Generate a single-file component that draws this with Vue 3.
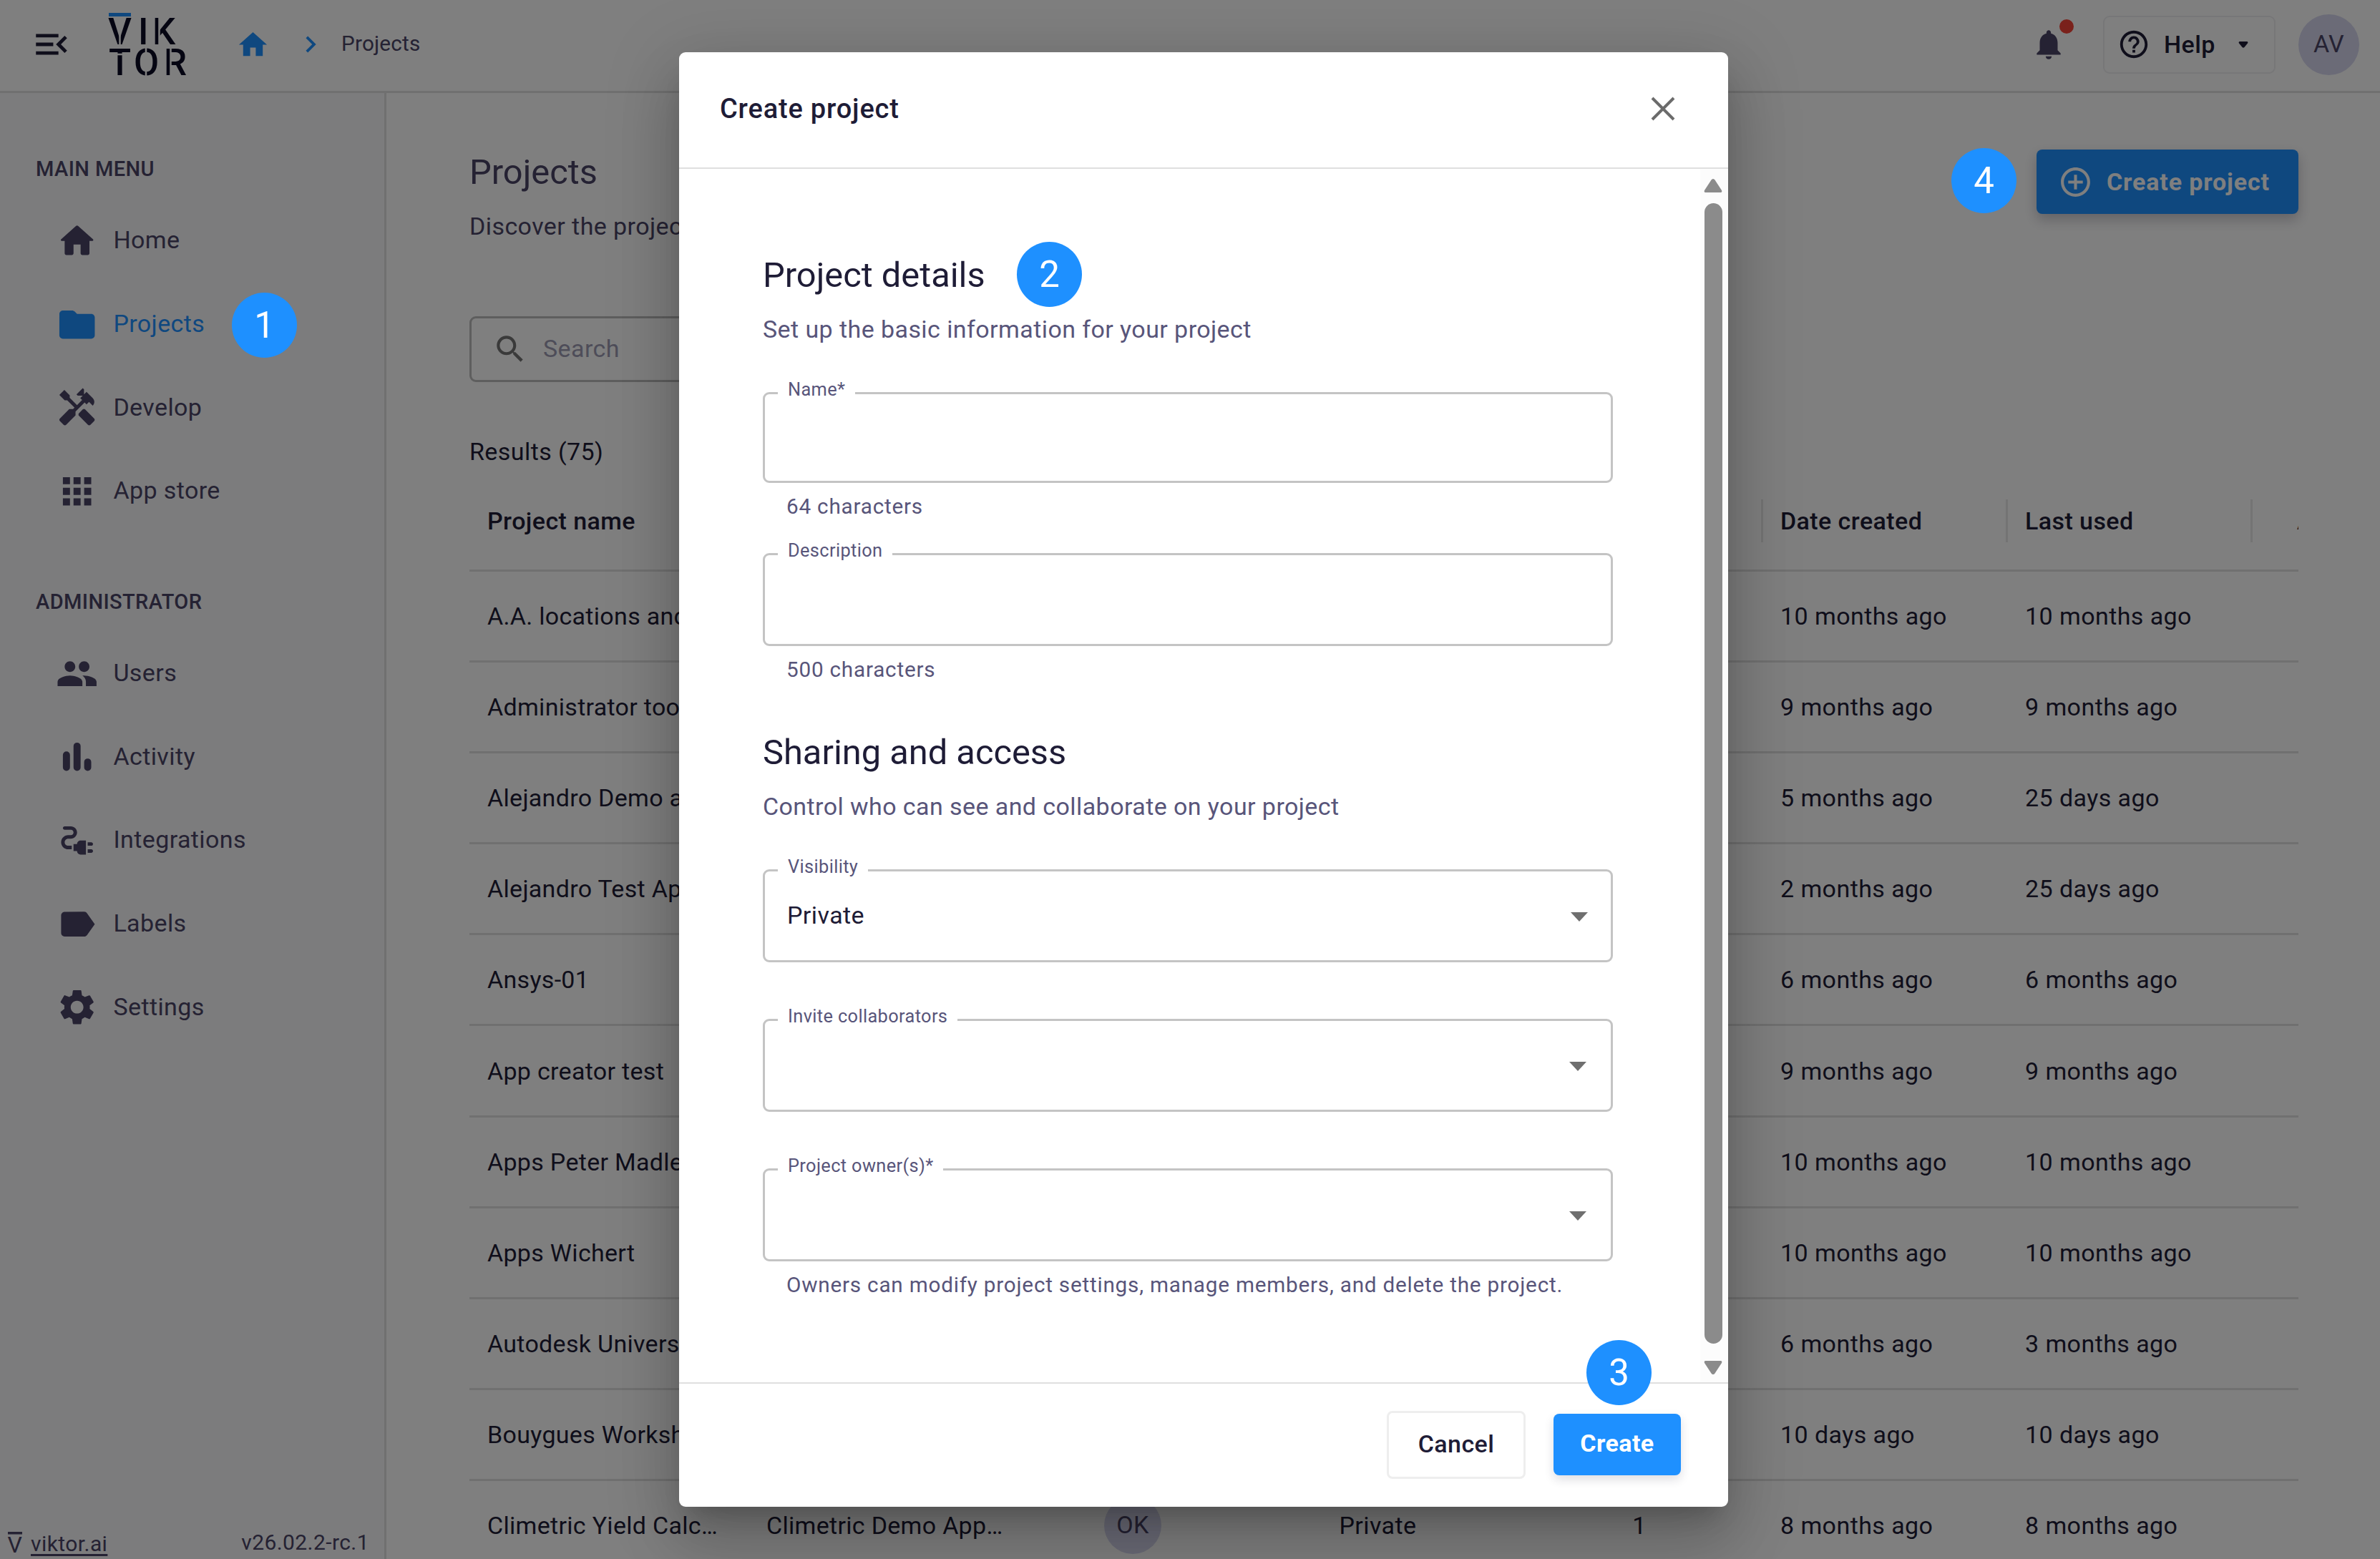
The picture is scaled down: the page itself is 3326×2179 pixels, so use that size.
<template>
  <div class="page">
    <header class="topbar">
      <svg class="menu-icon" viewBox="0 0 24 24"><path :d="icons.menuOpen" /></svg>
      <svg class="logo" viewBox="0 0 110 90">
        <rect class="logo-bar" x="2" y="1" width="31" height="5" />
        <text x="1 43 63" y="44.5">VIK</text>
        <text x="2 37 79" y="87.5">TOR</text>
        <path class="logo-cut" d="M0 59H34M17.500 30V46M54 48V56M54 82V90M72.500 6V46M88.500 50V90" />
      </svg>
      <svg class="home-icon" viewBox="0 0 24 24"><path :d="icons.homeSharp" /></svg>
      <svg class="crumb-arrow" viewBox="0 0 24 24"><path :d="icons.chevron" /></svg>
      <span class="crumb">Projects</span>
      <div class="bell">
        <svg viewBox="0 0 24 24"><path :d="icons.bell" /></svg>
        <i class="dot"></i>
      </div>
      <button class="help-btn">
        <svg class="help-icon" viewBox="0 0 24 24"><path :d="icons.help" /></svg>
        <span>Help</span>
        <svg class="help-caret" viewBox="0 0 14 9"><path d="M1.500 0H12.500Q14 1 13 2.500L8.500 8Q7 9.500 5.500 8L1 2.500Q0 1 1.500 0Z" /></svg>
      </button>
      <div class="avatar">AV</div>
    </header>

    <div class="body">
      <aside class="sidebar">
        <nav v-for="group in menu" :key="group.title" class="group">
          <h4>{{ group.title }}</h4>
          <a v-for="item in group.items" :key="item.label" class="nav-item" :class="{ active: item.active }">
            <svg viewBox="0 0 24 24"><path :d="icons[item.icon]" /></svg>
            <span>{{ item.label }}</span>
          </a>
        </nav>
        <div class="sidebar-footer">
          <svg class="mini-logo" viewBox="0 0 20 30">
            <rect x="0" y="0" width="20" height="3.500" />
            <text x="-0.500" y="29">V</text>
          </svg>
          <a class="site">viktor.ai</a>
          <span class="version">v26.02.2-rc.1</span>
        </div>
      </aside>

      <main class="content">
        <div class="content-head">
          <div>
            <h1>Projects</h1>
            <p class="lead">Discover the projects you have access to</p>
          </div>
          <button class="create-btn">
            <svg viewBox="0 0 24 24"><path :d="icons.addCircle" /></svg>
            <span>Create project</span>
          </button>
        </div>
        <div class="search">
          <svg viewBox="0 0 24 24"><path :d="icons.search" /></svg>
          <span>Search</span>
        </div>
        <div class="results">Results (75)</div>
        <div class="table">
          <div class="row head">
            <div class="cell">Project name</div>
            <div class="cell">Apps</div>
            <div class="cell center">Owner</div>
            <div class="cell center">Visibility</div>
            <div class="cell center">Members</div>
            <div class="cell split">Date created</div>
            <div class="cell split">Last used</div>
            <div class="cell split actions">Actions</div>
          </div>
          <div v-for="p in projects" :key="p.name" class="row">
            <div class="cell name">{{ p.name }}</div>
            <div class="cell name">{{ p.app }}</div>
            <div class="cell center"><span v-if="p.owner" class="owner">{{ p.owner }}</span></div>
            <div class="cell center">{{ p.visibility }}</div>
            <div class="cell center">{{ p.members }}</div>
            <div class="cell">{{ p.created }}</div>
            <div class="cell">{{ p.used }}</div>
            <div class="cell"></div>
          </div>
        </div>
      </main>
    </div>

    <div class="backdrop">
      <section class="dialog">
        <div class="dialog-head">
          <h2>Create project</h2>
          <svg class="close" viewBox="0 0 34 34"><path d="M2 2L32 32M32 2L2 32" /></svg>
        </div>
        <div class="dialog-body">
          <form class="form">
            <h3>Project details</h3>
            <p class="sub">Set up the basic information for your project</p>
            <fieldset class="field name-field"><legend>Name*</legend></fieldset>
            <p class="hint">64 characters</p>
            <fieldset class="field"><legend>Description</legend></fieldset>
            <p class="hint">500 characters</p>

            <h3 class="second">Sharing and access</h3>
            <p class="sub">Control who can see and collaborate on your project</p>
            <fieldset class="field select visibility">
              <legend>Visibility</legend>
              <span>Private</span>
              <i class="caret"></i>
            </fieldset>
            <fieldset class="field select">
              <legend>Invite collaborators</legend>
              <i class="caret"></i>
            </fieldset>
            <fieldset class="field select">
              <legend>Project owner(s)*</legend>
              <i class="caret"></i>
            </fieldset>
            <p class="hint">Owners can modify project settings, manage members, and delete the project.</p>
          </form>
          <div class="scrollbar">
            <svg viewBox="0 0 26 20"><path d="M13 1Q14.500 1 15.500 2.500L25 17Q26 20 23.500 20H2.500Q0 20 1 17L10.500 2.500Q11.500 1 13 1Z" /></svg>
            <div class="thumb"></div>
            <svg class="down" viewBox="0 0 26 20"><path d="M13 1Q14.500 1 15.500 2.500L25 17Q26 20 23.500 20H2.500Q0 20 1 17L10.500 2.500Q11.500 1 13 1Z" /></svg>
          </div>
        </div>
        <div class="dialog-foot">
          <button class="btn cancel">Cancel</button>
          <button class="btn primary">Create</button>
        </div>
      </section>
    </div>

    <span v-for="n in 4" :key="n" class="step" :class="'step-' + n">{{ n }}</span>
  </div>
</template>

<script setup>
import { ref } from 'vue'

const icons = {
  menuOpen: 'M3 18h13v-2H3v2zM3 13h10v-2H3v2zM3 6v2h13V6H3zM21 15.590L17.420 12 21 8.410 19.590 7l-5 5 5 5L21 15.590z',
  homeSharp: 'M10 20v-6h4v6h5v-8h3L12 3 2 12h3v8z',
  chevron: 'M10 6L8.590 7.410 13.170 12l-4.580 4.590L10 18l6-6z',
  bell: 'M12 22c1.100 0 2-.9 2-2h-4c0 1.100.89 2 2 2zm6-6v-5c0-3.070-1.640-5.640-4.500-6.320V4c0-.83-.67-1.500-1.500-1.500s-1.500.67-1.500 1.500v.68C7.630 5.360 6 7.920 6 11v5l-2 2v1h16v-1l-2-2z',
  help: 'M11 18h2v-2h-2v2zm1-16C6.480 2 2 6.480 2 12s4.480 10 10 10 10-4.480 10-10S17.520 2 12 2zm0 18c-4.410 0-8-3.590-8-8s3.590-8 8-8 8 3.590 8 8-3.590 8-8 8zm0-14c-2.210 0-4 1.790-4 4h2c0-1.100.9-2 2-2s2 .9 2 2c0 2-3 1.750-3 5h2c0-2.250 3-2.500 3-5 0-2.210-1.790-4-4-4z',
  addCircle: 'M13 7h-2v4H7v2h4v4h2v-4h4v-2h-4V7zm-1-5C6.480 2 2 6.480 2 12s4.480 10 10 10 10-4.480 10-10S17.520 2 12 2zm0 18c-4.410 0-8-3.590-8-8s3.590-8 8-8 8 3.590 8 8-3.590 8-8 8z',
  search: 'M15.500 14h-.79l-.28-.27C15.410 12.590 16 11.110 16 9.500 16 5.910 13.090 3 9.500 3S3 5.910 3 9.500 5.910 16 9.500 16c1.610 0 3.090-.59 4.230-1.570l.27.28v.79l5 4.990L20.490 19l-4.990-5zm-6 0C7.010 14 5 11.990 5 9.500S7.010 5 9.500 5 14 7.010 14 9.500 11.990 14 9.500 14z',
  home: 'M10 19v-5h4v5c0 .55.45 1 1 1h3c.55 0 1-.45 1-1v-7h1.700c.46 0 .68-.57.33-.87L12.670 3.600c-.38-.34-.96-.34-1.340 0l-8.360 7.530c-.34.3-.13.87.33.87H5v7c0 .55.45 1 1 1h3c.55 0 1-.45 1-1z',
  folder: 'M10.590 4.590C10.210 4.210 9.700 4 9.170 4H4c-1.100 0-1.990.9-1.990 2L2 18c0 1.100.9 2 2 2h16c1.100 0 2-.9 2-2V8c0-1.100-.9-2-2-2h-8l-1.410-1.410z',
  handyman: 'M21.670 18.170l-5.300-5.300h-.99l-2.540 2.540v.99l5.300 5.300c.39.39 1.020.39 1.410 0l2.120-2.120c.39-.38.39-1.020 0-1.410zM17.340 10.190l1.410-1.410 2.120 2.120c1.170-1.170 1.170-3.070 0-4.240l-3.540-3.540-1.410 1.410V1.710L15.220 1l-3.540 3.540.71.71h2.830l-1.410 1.410 1.060 1.060-2.890 2.890-4.130-4.130V5.060L4.830 2.040 2 4.870 5.030 7.900h1.410l4.130 4.130-.85.85H7.600l-5.300 5.300c-.39.39-.39 1.020 0 1.410l2.120 2.120c.39.39 1.020.39 1.410 0l5.300-5.300v-2.120l5.150-5.150 1.060 1.050z',
  apps: 'M4 8h4V4H4v4zm6 12h4v-4h-4v4zm-6 0h4v-4H4v4zm0-6h4v-4H4v4zm6 0h4v-4h-4v4zm6-10v4h4V4h-4zm-6 4h4V4h-4v4zm6 6h4v-4h-4v4zm0 6h4v-4h-4v4z',
  people: 'M16 11c1.660 0 2.990-1.340 2.990-3S17.660 5 16 5s-3 1.340-3 3 1.340 3 3 3zm-8 0c1.660 0 2.990-1.340 2.990-3S9.660 5 8 5 5 6.340 5 8s1.340 3 3 3zm0 2c-2.330 0-7 1.170-7 3.500V19h14v-2.500c0-2.330-4.670-3.500-7-3.500zm8 0c-.29 0-.62.02-.97.05 1.160.84 1.970 1.970 1.970 3.450V19h6v-2.500c0-2.330-4.670-3.500-7-3.500z',
  bars: 'M12 20a2 2 0 0 1-2-2V6a2 2 0 0 1 4 0v12a2 2 0 0 1-2 2zM6 20a2 2 0 0 1-2-2v-7a2 2 0 0 1 4 0v7a2 2 0 0 1-2 2zM18 20a2 2 0 0 1-2-2v-3a2 2 0 0 1 4 0v3a2 2 0 0 1-2 2z',
  plug: 'M21 14c0-.55-.45-1-1-1h-2v2h2c.55 0 1-.45 1-1zm-1 3h-2v2h2c.55 0 1-.45 1-1s-.45-1-1-1zm-8-3h-2v4h2c0 1.100.9 2 2 2h3v-8h-3c-1.100 0-2 .9-2 2zM5 13c0-1.100.9-2 2-2h1.500c1.930 0 3.500-1.570 3.500-3.500S10.430 4 8.500 4H5c-.55 0-1 .45-1 1s.45 1 1 1h3.500c.83 0 1.500.67 1.500 1.500S9.330 9 8.500 9H7c-2.210 0-4 1.790-4 4s1.790 4 4 4h2v-2H7c-1.100 0-2-.9-2-2z',
  label: 'M17.630 5.840C17.270 5.330 16.670 5 16 5L5 5.010C3.900 5.010 3 5.900 3 7v10c0 1.100.9 1.990 2 1.990L16 19c.67 0 1.270-.33 1.630-.84L22 12l-4.370-6.160z',
  settings: 'M19.140 12.940c.04-.3.06-.61.06-.94 0-.32-.02-.64-.07-.94l2.030-1.580c.18-.14.23-.41.12-.61l-1.920-3.320c-.12-.22-.37-.29-.59-.22l-2.390.96c-.5-.38-1.030-.7-1.620-.94l-.36-2.540c-.04-.24-.24-.41-.48-.41h-3.840c-.24 0-.43.17-.47.41l-.36 2.540c-.59.24-1.130.57-1.620.94l-2.390-.96c-.22-.08-.47 0-.59.22L2.740 8.870c-.12.21-.08.47.12.61l2.030 1.580c-.05.3-.09.63-.09.94s.02.64.07.94l-2.030 1.580c-.18.14-.23.41-.12.61l1.920 3.320c.12.22.37.29.59.22l2.390-.96c.5.38 1.030.7 1.620.94l.36 2.540c.05.24.24.41.48.41h3.840c.24 0 .44-.17.47-.41l.36-2.540c.59-.24 1.130-.56 1.620-.94l2.390.96c.22.08.47 0 .59-.22l1.920-3.320c.12-.22.07-.47-.12-.61l-2.010-1.580zM12 15.600c-1.980 0-3.600-1.620-3.600-3.600s1.620-3.600 3.600-3.600 3.600 1.620 3.600 3.600-1.620 3.600-3.600 3.600z'
}

const menu = [
  {
    title: 'MAIN MENU',
    items: [
      { label: 'Home', icon: 'home' },
      { label: 'Projects', icon: 'folder', active: true },
      { label: 'Develop', icon: 'handyman' },
      { label: 'App store', icon: 'apps' }
    ]
  },
  {
    title: 'ADMINISTRATOR',
    items: [
      { label: 'Users', icon: 'people' },
      { label: 'Activity', icon: 'bars' },
      { label: 'Integrations', icon: 'plug' },
      { label: 'Labels', icon: 'label' },
      { label: 'Settings', icon: 'settings' }
    ]
  }
]

const projects = ref([
  { name: 'A.A. locations and', created: '10 months ago', used: '10 months ago' },
  { name: 'Administrator tools', created: '9 months ago', used: '9 months ago' },
  { name: 'Alejandro Demo app', created: '5 months ago', used: '25 days ago' },
  { name: 'Alejandro Test App', created: '2 months ago', used: '25 days ago' },
  { name: 'Ansys-01', created: '6 months ago', used: '6 months ago' },
  { name: 'App creator test', created: '9 months ago', used: '9 months ago' },
  { name: 'Apps Peter Madlener', created: '10 months ago', used: '10 months ago' },
  { name: 'Apps Wichert', created: '10 months ago', used: '10 months ago' },
  { name: 'Autodesk University', created: '6 months ago', used: '3 months ago' },
  { name: 'Bouygues Workshop', created: '10 days ago', used: '10 days ago' },
  {
    name: 'Climetric Yield Calc…',
    app: 'Climetric Demo App…',
    owner: 'OK',
    visibility: 'Private',
    members: 1,
    created: '8 months ago',
    used: '8 months ago'
  }
])
</script>

<style>
body {
  margin: 0;
  overflow: hidden;
}
</style>

<style scoped>
* {
  box-sizing: border-box;
}
h1, h2, h3, h4, p {
  margin: 0;
}
svg {
  display: block;
  flex: none;
  fill: currentColor;
}
button {
  font: inherit;
  color: inherit;
  letter-spacing: inherit;
}
.page {
  position: relative;
  width: 3326px;
  height: 2179px;
  overflow: hidden;
  background: #fff;
  color: #1e1c36;
  font-family: Roboto, "Liberation Sans", sans-serif;
  font-size: 34px;
  line-height: 40px;
  letter-spacing: 0.42px;
}

/* top bar */
.topbar {
  display: flex;
  align-items: center;
  height: 130px;
  padding: 0 29px 3px 43px;
  border-bottom: 3px solid #e0e0e0;
}
.menu-icon {
  width: 58px;
  height: 58px;
}
.logo {
  width: 110px;
  height: 90px;
  margin-left: 49px;
  overflow: visible;
  color: #0b0a24;
  font-size: 51px;
  font-weight: 500;
  letter-spacing: 0;
}
.logo-bar {
  fill: #1e90ff;
}
.logo-cut {
  fill: none;
  stroke: #fff;
  stroke-width: 2.500;
}
.home-icon {
  width: 47px;
  height: 47px;
  margin-left: 70px;
  color: #1e90ff;
}
.crumb-arrow {
  width: 46px;
  height: 46px;
  margin-left: 34px;
  color: #1e90ff;
}
.crumb {
  margin: 0 0 2px 20px;
  font-size: 29.700px;
  letter-spacing: 0.2px;
  color: #4a4466;
}
.bell {
  position: relative;
  margin-left: auto;
  color: #4a4466;
}
.bell svg {
  width: 50px;
  height: 50px;
}
.dot {
  position: absolute;
  top: -10px;
  right: -10px;
  width: 20px;
  height: 20px;
  border-radius: 50%;
  background: #f44336;
}
.help-btn {
  display: flex;
  align-items: center;
  width: 241px;
  height: 81px;
  margin-left: 51px;
  padding: 0 0 0 18px;
  border: 2px solid #eeeef0;
  border-radius: 9px;
  background: none;
  font-weight: 500;
}
.help-icon {
  width: 46px;
  height: 46px;
}
.help-btn span {
  width: 70px;
  margin-left: 19px;
}
.help-caret {
  width: 14px;
  height: 9px;
  margin-left: 34px;
}
.avatar {
  width: 85px;
  height: 85px;
  margin-left: 32px;
  border-radius: 50%;
  background: #d6d7ee;
  color: #4a4466;
  text-align: center;
  line-height: 83px;
}

/* sidebar */
.body {
  display: flex;
  height: 2049px;
}
.sidebar {
  position: relative;
  flex: none;
  width: 540px;
  padding-top: 86px;
  border-right: 3px solid #e0e0e0;
  background: #f8f8fb;
  color: #4a4466;
}
.group + .group {
  margin-top: 77px;
}
.group h4 {
  margin: 0 0 21px 50px;
  font-size: 29px;
  font-weight: 500;
  line-height: 40px;
  letter-spacing: 0.42px;
}
.nav-item {
  display: flex;
  align-items: center;
  height: 116.670px;
  padding-left: 78px;
  letter-spacing: 0.4px;
}
.nav-item svg {
  width: 59.400px;
  height: 59.400px;
  margin-top: 3px;
}
.nav-item span {
  margin-left: 21px;
}
.nav-item.active {
  color: #1e90ff;
}
.sidebar-footer {
  position: absolute;
  left: 11px;
  right: 21px;
  bottom: 3px;
  display: flex;
  align-items: center;
  height: 40px;
  font-size: 30px;
}
.mini-logo {
  width: 20px;
  height: 30px;
  font-size: 32px;
  overflow: visible;
}
.site {
  margin: 3px auto 0 12px;
  text-decoration: underline;
  text-underline-offset: 4px;
}

/* projects page */
.content {
  flex: 1;
  min-width: 0;
  padding: 79px 114px 0 116px;
}
.content-head {
  display: flex;
  justify-content: space-between;
  align-items: flex-start;
  color: #4a4466;
}
h1 {
  font-size: 48.800px;
  font-weight: 400;
  line-height: 64px;
  letter-spacing: 0;
}
.lead {
  margin-top: 23px;
}
.create-btn {
  display: flex;
  align-items: center;
  width: 366px;
  height: 90px;
  padding: 0 0 0 30px;
  border: 0;
  border-radius: 8px;
  background: #1e90ff;
  box-shadow: 0 8px 18px rgba(30, 28, 54, 0.25);
  color: #fff;
  font-weight: 700;
  letter-spacing: 0.85px;
}
.create-btn svg {
  width: 49px;
  height: 49px;
}
.create-btn span {
  margin-left: 19px;
  white-space: nowrap;
}
.search {
  display: flex;
  align-items: center;
  width: 900px;
  height: 92px;
  margin-top: 106px;
  padding-left: 29px;
  border: 3px solid #bcbcbc;
  border-radius: 9px;
  color: #9c9bb2;
}
.search svg {
  width: 50px;
  height: 50px;
  color: #757575;
}
.search span {
  margin: 0 0 2px 21px;
}
.results {
  margin: 77px 0 6px;
  font-weight: 450;
}
.table {
  width: 2556px;
  overflow: hidden;
}
.row {
  display: grid;
  grid-template-columns: 390px 390px 294px 391px 340px 342px 342px 67px;
  align-items: center;
  height: 127.100px;
  border-bottom: 3px solid #e0e0e0;
}
.row.head {
  height: 142px;
  padding-top: 2px;
  font-weight: 550;
}
.cell {
  padding-left: 25px;
  white-space: nowrap;
}
.cell.name {
  letter-spacing: 0.3px;
}
.cell.center {
  padding-left: 0;
  text-align: center;
}
.cell:nth-child(6),
.cell:nth-child(7) {
  padding-left: 27px;
}
.cell.split {
  padding-left: 24px;
  border-left: 3px solid #e8e8e8;
  line-height: 60px;
}
.cell.actions {
  padding-left: 62px;
}
.owner {
  display: inline-block;
  width: 80px;
  height: 80px;
  border-radius: 50%;
  background: #d6d7ee;
  color: #4a4466;
  line-height: 79px;
}

/* dialog */
.backdrop {
  position: absolute;
  inset: 0;
  display: flex;
  align-items: flex-start;
  padding: 73px 0 0 949px;
  background: rgba(0, 0, 0, 0.5);
}
.dialog {
  display: flex;
  flex-direction: column;
  width: 1466px;
  height: 2033px;
  border-radius: 9px;
  background: #fff;
  box-shadow: 0 23px 32px -15px rgba(0, 0, 0, 0.2), 0 51px 81px 6px rgba(0, 0, 0, 0.14), 0 19px 98px 17px rgba(0, 0, 0, 0.12);
}
.dialog-head {
  display: flex;
  align-items: center;
  justify-content: space-between;
  height: 163px;
  padding: 0 74px 3px 57px;
  border-bottom: 2px solid #dfdfdf;
}
h2 {
  font-size: 38px;
  font-weight: 500;
  letter-spacing: 0.8px;
}
.close {
  width: 34px;
  height: 34px;
  fill: none;
  stroke: #6b6b6b;
  stroke-width: 4;
}
.dialog-body {
  display: flex;
  flex: 1;
}
.form {
  width: 1427px;
  padding: 119px 122px 0 117px;
}
h3 {
  font-size: 48.800px;
  font-weight: 400;
  line-height: 60px;
  letter-spacing: 0;
}
h3.second {
  margin-top: 66px;
}
.sub {
  margin-top: 25px;
  color: #58557a;
}
.field {
  position: relative;
  width: 1188px;
  height: 149px;
  min-width: 0;
  margin: 26px 0 0;
  padding: 0 0 0 18px;
  border: 3px solid #c4c4c4;
  border-radius: 9px;
}
.field legend {
  height: 40px;
  margin: 0;
  padding: 0 14px 9px;
  font-size: 25.400px;
  line-height: 31px;
  letter-spacing: 0.35px;
  color: #58557a;
}
.name-field {
  height: 146px;
  margin-top: 49px;
}
.hint {
  margin: 13px 0 0 33px;
  font-size: 29.700px;
  letter-spacing: 0.78px;
  color: #58557a;
}
.field.select {
  margin-top: 60px;
}
.field.visibility {
  margin-top: 49px;
}
.field.visibility span {
  display: block;
  margin: 23px 0 0 13px;
}
.caret {
  position: absolute;
  top: 39px;
  right: 34px;
  border: 12px solid transparent;
  border-top: 13px solid #6f6f6f;
  border-bottom: 0;
}
.visibility .caret {
  right: 32px;
}
.scrollbar {
  display: flex;
  flex-direction: column;
  align-items: center;
  width: 39px;
  padding: 13px 3px 10px 0;
  background: #fcfcfc;
  color: #8b8b8b;
}
.scrollbar svg {
  width: 26px;
  height: 20px;
}
.scrollbar .down {
  transform: rotate(180deg);
}
.thumb {
  flex: 1;
  width: 25px;
  margin: 15px 0 24px;
  border-radius: 13px;
  background: #8b8b8b;
}
.dialog-foot {
  display: flex;
  align-items: center;
  justify-content: flex-end;
  gap: 39px;
  height: 174px;
  padding: 0 66px 1px 0;
  border-top: 2px solid #dfdfdf;
}
.btn {
  padding: 0 0 3px;
  border-radius: 8px;
  font-weight: 550;
}
.cancel {
  width: 194px;
  height: 95px;
  border: 3px solid #eee;
  background: #fff;
}
.primary {
  width: 178px;
  height: 86px;
  margin-bottom: 2px;
  border: 0;
  background: #1e90ff;
  box-shadow: 0 6px 14px rgba(30, 28, 54, 0.14);
  color: #fff;
  font-weight: 700;
}

/* numbered markers laid over the page */
.step {
  position: absolute;
  width: 91px;
  height: 91px;
  border-radius: 50%;
  background: #1e90ff;
  color: #fff;
  font-size: 51px;
  line-height: 91px;
  letter-spacing: 0;
  text-align: center;
}
.step-1 {
  left: 324px;
  top: 409px;
}
.step-2 {
  left: 1421px;
  top: 338px;
}
.step-3 {
  left: 2217px;
  top: 1873px;
}
.step-4 {
  left: 2727px;
  top: 207px;
}
</style>
